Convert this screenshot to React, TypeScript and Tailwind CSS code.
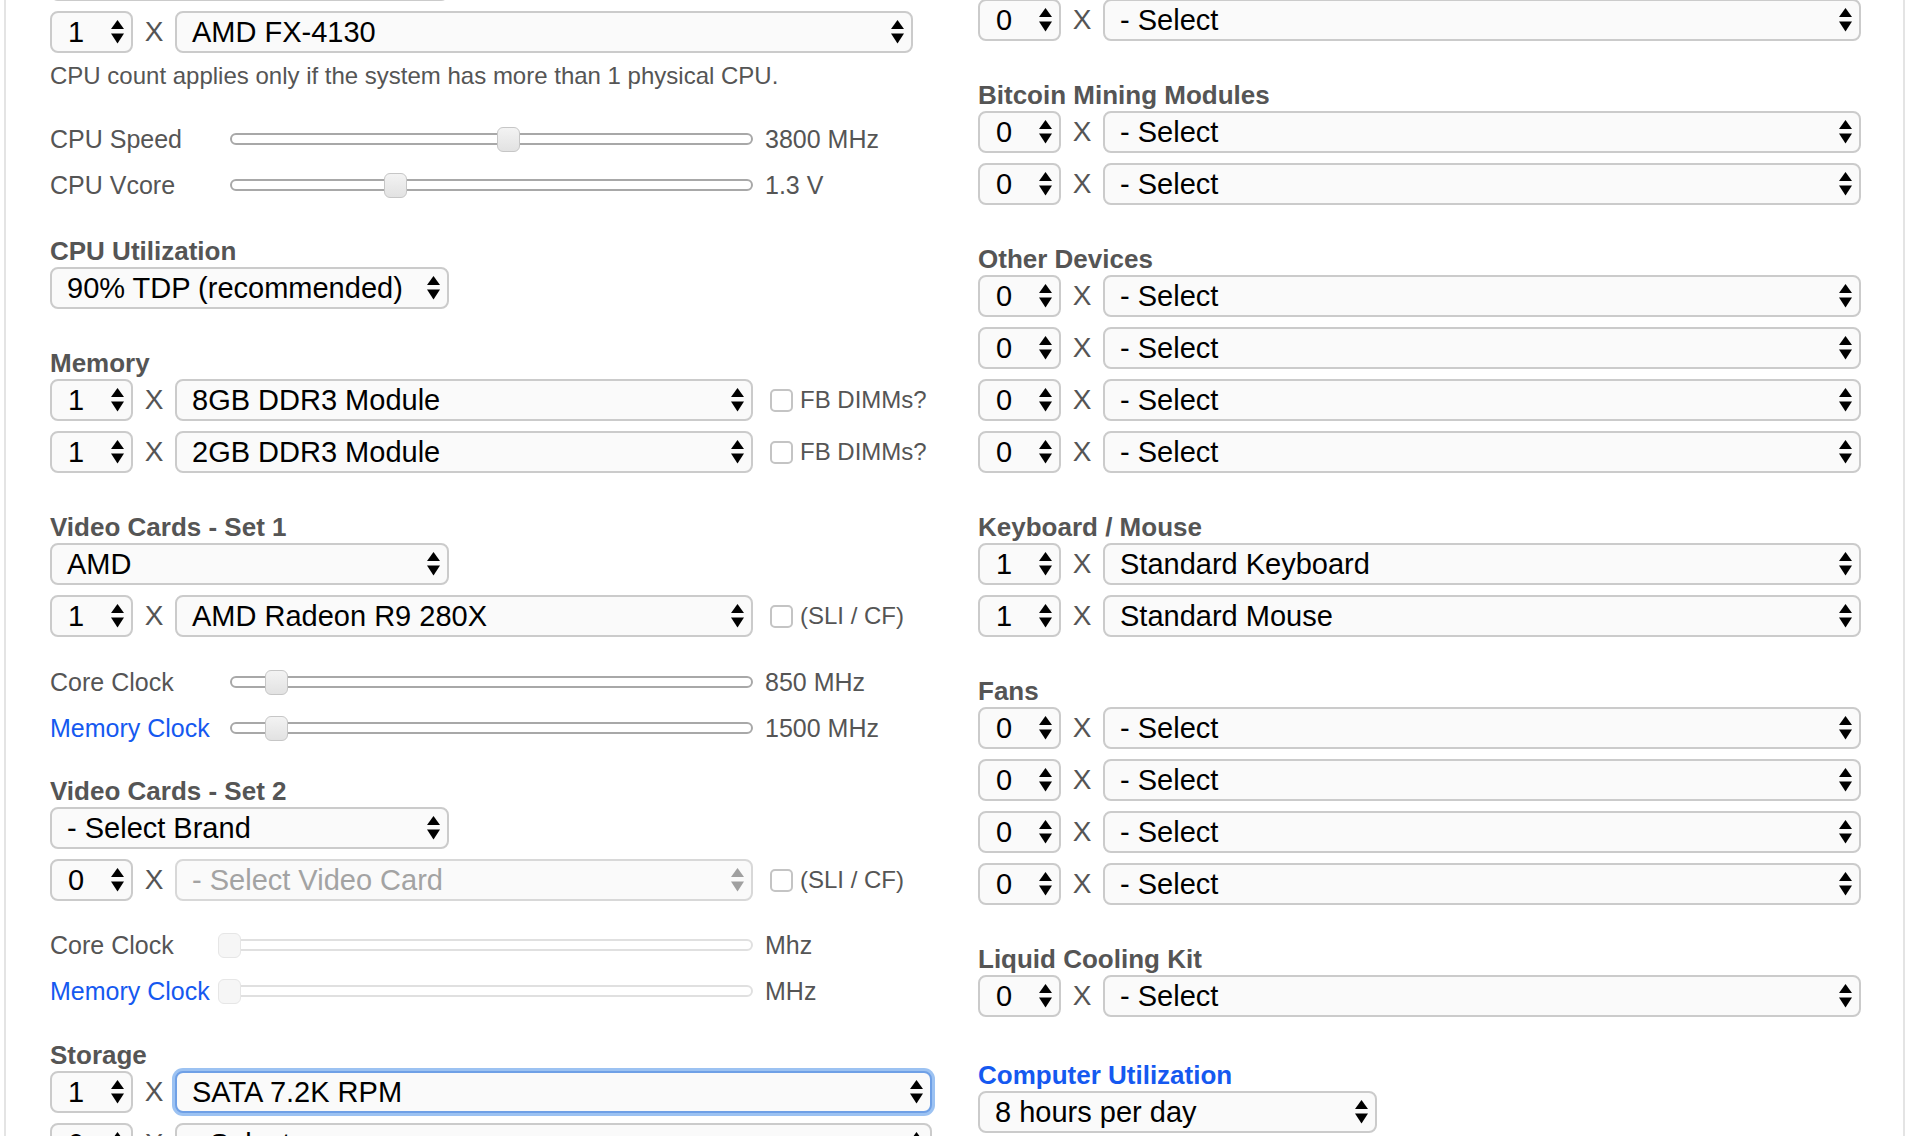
import React from "react";

const FONT = "font-['Liberation_Sans',Arial,sans-serif]";

function Arrows({ disabled }: { disabled?: boolean }) {
  const c = disabled ? "#a0a0a0" : "#000";
  return (
    <svg width="13" height="24" viewBox="0 0 13 24" className="shrink-0">
      <path d="M6.5 0 L13 9 L0 9 Z" fill={c} />
      <path d="M0 13.5 L13 13.5 L6.5 23.5 Z" fill={c} />
    </svg>
  );
}

function Sel({
  text,
  w,
  disabled,
  focus,
}: {
  text: string;
  w: string;
  disabled?: boolean;
  focus?: boolean;
}) {
  const border = focus
    ? "border-[#6fa0e6] ring-[3px] ring-[#9cc2f2]"
    : disabled
    ? "border-[#d8d8d8]"
    : "border-[#cbcbcb]";
  return (
    <div
      className={`flex h-[42px] shrink-0 items-center justify-between rounded-[8px] border-2 bg-[#fafafa] pl-[15px] pr-[7px] ${border} ${w}`}
    >
      <span
        className={`whitespace-nowrap text-[29px] leading-none ${
          disabled ? "text-[#a3a3a3]" : "text-black"
        }`}
      >
        {text}
      </span>
      <Arrows disabled={disabled} />
    </div>
  );
}

function Qty({ n }: { n: string }) {
  return (
    <div className="flex h-[42px] w-[83px] shrink-0 items-center justify-between rounded-[8px] border-2 border-[#cbcbcb] bg-[#fafafa] pl-[16px] pr-[7px]">
      <span className="text-[29px] leading-none text-black">{n}</span>
      <Arrows />
    </div>
  );
}

function Row({
  n,
  text,
  w,
  disabled,
  focus,
  check,
}: {
  n: string;
  text: string;
  w: string;
  disabled?: boolean;
  focus?: boolean;
  check?: string;
}) {
  return (
    <div className="flex h-[42px] items-center">
      <Qty n={n} />
      <div className="w-[42px] text-center text-[28px] leading-none text-[#555]">X</div>
      <Sel text={text} w={w} disabled={disabled} focus={focus} />
      {check && (
        <div className="ml-[17px] flex items-center">
          <div className="h-[23px] w-[23px] rounded-[5px] border-2 border-[#c4c4c4] bg-white" />
          <span className="ml-[7px] text-[24px] leading-none text-[#555]">{check}</span>
        </div>
      )}
    </div>
  );
}

function Heading({
  children,
  mt,
  blue,
}: {
  children: React.ReactNode;
  mt: string;
  blue?: boolean;
}) {
  return (
    <div
      className={`h-[32px] text-[26px] font-bold leading-[32px] ${mt} ${
        blue ? "text-[#1559f0]" : "text-[#555]"
      }`}
    >
      {children}
    </div>
  );
}

function Slider({
  label,
  value,
  thumb,
  blue,
  disabled,
}: {
  label: string;
  value: string;
  thumb: number;
  blue?: boolean;
  disabled?: boolean;
}) {
  return (
    <div className="flex h-[46px] items-center">
      <div
        className={`w-[180px] shrink-0 text-[25px] leading-none ${
          blue ? "text-[#1559f0]" : "text-[#555]"
        }`}
      >
        {label}
      </div>
      <div
        className={`relative h-[12px] w-[523px] shrink-0 rounded-full border-2 bg-white ${
          disabled ? "border-[#e0e0e0]" : "border-[#a8a8a8]"
        }`}
      >
        <div
          className={`absolute top-[-8.5px] h-[25px] w-[23px] rounded-[6px] border ${
            disabled
              ? "border-[#e6e6e6] bg-[#f6f6f6]"
              : "border-[#c6c6c6] bg-gradient-to-b from-[#f3f3f3] to-[#e2e2e2]"
          }`}
          style={{ left: thumb - 232 }}
        />
      </div>
      <div className="ml-[12px] whitespace-nowrap text-[25px] leading-none text-[#555]">
        {value}
      </div>
    </div>
  );
}

export default function App() {
  return (
    <div className={`h-[1136px] w-full overflow-hidden bg-white ${FONT}`}>
      <div className="ml-[4px] flex h-[1136px] w-[1901px] border-x-2 border-[#e4e4e4]">
        {/* Left column */}
        <div className="ml-[44px] mt-[-41px] flex w-[928px] shrink-0 flex-col">
          <Sel text="" w="w-[399px]" />
          <div className="mt-[10px]">
            <Row n="1" text="AMD FX-4130" w="w-[738px]" />
          </div>
          <div className="mt-[9px] h-[28px] text-[24px] leading-[28px] text-[#555]">
            CPU count applies only if the system has more than 1 physical CPU.
          </div>
          <div className="mt-[26px]">
            <Slider label="CPU Speed" value="3800 MHz" thumb={497} />
            <Slider label="CPU Vcore" value="1.3 V" thumb={384} />
          </div>
          <Heading mt="mt-[27px]">CPU Utilization</Heading>
          <Sel text="90% TDP (recommended)" w="w-[399px]" />

          <Heading mt="mt-[38px]">Memory</Heading>
          <div className="flex flex-col gap-[10px]">
            <Row n="1" text="8GB DDR3 Module" w="w-[578px]" check="FB DIMMs?" />
            <Row n="1" text="2GB DDR3 Module" w="w-[578px]" check="FB DIMMs?" />
          </div>

          <Heading mt="mt-[38px]">Video Cards - Set 1</Heading>
          <Sel text="AMD" w="w-[399px]" />
          <div className="mt-[10px]">
            <Row n="1" text="AMD Radeon R9 280X" w="w-[578px]" check="(SLI / CF)" />
          </div>
          <div className="mt-[22px]">
            <Slider label="Core Clock" value="850 MHz" thumb={265} />
            <Slider label="Memory Clock" value="1500 MHz" thumb={265} blue />
          </div>

          <Heading mt="mt-[24px]">Video Cards - Set 2</Heading>
          <Sel text="- Select Brand" w="w-[399px]" />
          <div className="mt-[10px]">
            <Row n="0" text="- Select Video Card" w="w-[578px]" disabled check="(SLI / CF)" />
          </div>
          <div className="mt-[21px]">
            <Slider label="Core Clock" value="Mhz" thumb={218} disabled />
            <Slider label="Memory Clock" value="MHz" thumb={218} disabled blue />
          </div>

          <Heading mt="mt-[25px]">Storage</Heading>
          <div className="flex flex-col gap-[10px]">
            <Row n="1" text="SATA 7.2K RPM" w="w-[757px]" focus />
            <Row n="0" text="- Select" w="w-[757px]" />
          </div>
        </div>

        {/* Right column */}
        <div className="mt-[-1px] flex w-[883px] shrink-0 flex-col">
          <Row n="0" text="- Select" w="w-[758px]" />

          <Heading mt="mt-[38px]">Bitcoin Mining Modules</Heading>
          <div className="flex flex-col gap-[10px]">
            <Row n="0" text="- Select" w="w-[758px]" />
            <Row n="0" text="- Select" w="w-[758px]" />
          </div>

          <Heading mt="mt-[38px]">Other Devices</Heading>
          <div className="flex flex-col gap-[10px]">
            <Row n="0" text="- Select" w="w-[758px]" />
            <Row n="0" text="- Select" w="w-[758px]" />
            <Row n="0" text="- Select" w="w-[758px]" />
            <Row n="0" text="- Select" w="w-[758px]" />
          </div>

          <Heading mt="mt-[38px]">Keyboard / Mouse</Heading>
          <div className="flex flex-col gap-[10px]">
            <Row n="1" text="Standard Keyboard" w="w-[758px]" />
            <Row n="1" text="Standard Mouse" w="w-[758px]" />
          </div>

          <Heading mt="mt-[38px]">Fans</Heading>
          <div className="flex flex-col gap-[10px]">
            <Row n="0" text="- Select" w="w-[758px]" />
            <Row n="0" text="- Select" w="w-[758px]" />
            <Row n="0" text="- Select" w="w-[758px]" />
            <Row n="0" text="- Select" w="w-[758px]" />
          </div>

          <Heading mt="mt-[38px]">Liquid Cooling Kit</Heading>
          <Row n="0" text="- Select" w="w-[758px]" />

          <Heading mt="mt-[42px]" blue>
            Computer Utilization
          </Heading>
          <Sel text="8 hours per day" w="w-[399px]" />
        </div>
      </div>
    </div>
  );
}
